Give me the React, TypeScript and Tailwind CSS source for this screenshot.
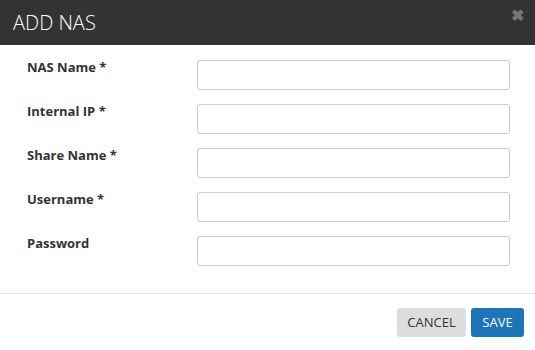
const fields = [
  { label: "NAS Name *", type: "text" },
  { label: "Internal IP *", type: "text" },
  { label: "Share Name *", type: "text" },
  { label: "Username *", type: "text" },
  { label: "Password", type: "password" },
];

export default function App() {
  return (
    <div className="h-[350px] w-[535px] bg-white font-['Open_Sans',sans-serif] text-[#333]">
      <div className="flex h-[45px] items-center justify-between bg-[#333] pl-[13px] pr-[11px]">
        <h1 className="text-[20px] font-light text-white">ADD NAS</h1>
        <button className="-mt-[15px] text-[16px] font-bold leading-none text-[#777]">✖</button>
      </div>

      <div className="flex flex-col gap-[14px] pb-[27px] pl-[27px] pr-[25px] pt-[15px]">
        {fields.map((f) => (
          <div key={f.label} className="flex items-start">
            <label className="-mt-[2px] w-[170px] text-[13px] font-bold leading-[18px]">
              {f.label}
            </label>
            <input
              type={f.type}
              className="h-[30px] flex-1 rounded-[3px] border border-[#ccc] px-2 text-[13px] outline-none"
            />
          </div>
        ))}
      </div>

      <div className="flex justify-end gap-[5px] border-t border-[#e5e5e5] pr-[11px] pt-[14px]">
        <button className="h-[29px] w-[69px] rounded-[3px] bg-[#ddd] text-[13px] text-[#333]">
          CANCEL
        </button>
        <button className="h-[29px] w-[53px] rounded-[3px] bg-[#1c75b9] text-[13px] text-white">
          SAVE
        </button>
      </div>
    </div>
  );
}
